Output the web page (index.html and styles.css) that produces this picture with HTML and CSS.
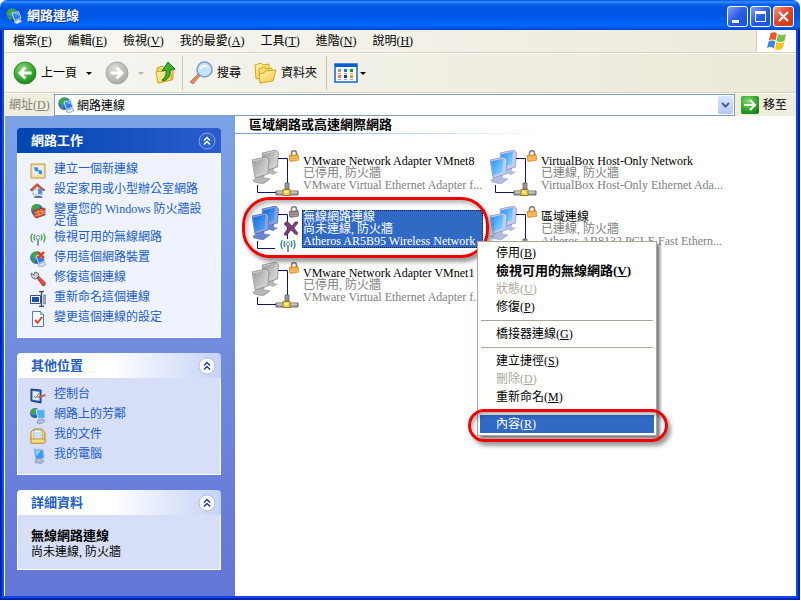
FILE: index.html
```html
<!DOCTYPE html>
<html lang="zh-Hant">
<head>
<meta charset="utf-8">
<meta name="viewport" content="width=device-width, initial-scale=1">
<title>網路連線</title>
<link rel="stylesheet" href="styles.css">
</head>
<body>
<svg class="defs" aria-hidden="true">
  <defs>
    <linearGradient id="screenOn" x1="0" y1="0" x2="1" y2="1"><stop offset="0" stop-color="#2f8cf0"/><stop offset="1" stop-color="#8fe0ff"/></linearGradient>
    <linearGradient id="screenOff" x1="0" y1="0" x2="1" y2="1"><stop offset="0" stop-color="#9a9a9a"/><stop offset="1" stop-color="#d8d8d8"/></linearGradient>
    <linearGradient id="screenSel" x1="0" y1="0" x2="1" y2="1"><stop offset="0" stop-color="#1568d8"/><stop offset="1" stop-color="#50a8f4"/></linearGradient>
    <radialGradient id="green" cx=".4" cy=".3" r=".8"><stop offset="0" stop-color="#86d676"/><stop offset=".6" stop-color="#35a52e"/><stop offset="1" stop-color="#177a14"/></radialGradient>
    <radialGradient id="grey" cx=".4" cy=".3" r=".8"><stop offset="0" stop-color="#dcdcd8"/><stop offset="1" stop-color="#a2a29f"/></radialGradient>
    <linearGradient id="folder" x1="0" y1="0" x2="1" y2="1"><stop offset="0" stop-color="#fff6b4"/><stop offset="1" stop-color="#f2c63c"/></linearGradient>
    <radialGradient id="globe" cx=".4" cy=".35" r=".7"><stop offset="0" stop-color="#6cb4f8"/><stop offset="1" stop-color="#0c3c90"/></radialGradient>
  </defs>
  <symbol id="netglobe" viewBox="0 0 16 16">
    <circle cx="6.500" cy="6.500" r="6.300" fill="url(#globe)"/>
    <path d="M3 1.500C6 0 9 1 9.500 3L6 4 5 7 3 7.500 1 5ZM1.500 9l3 0 1 3-2-.5Z" fill="#3caa36"/>
    <path d="M6 5l6.500-1.500L15 10l-6.500 2.500Z" fill="#2f7fe0" stroke="#c4daf8"/>
    <path d="M7.500 6L12 5l.8 2Z" fill="#86c4ff"/>
    <path d="M9 13l5-2 2 2.500-5 2.500-3-1.500Z" fill="#dbe3f2" stroke="#6d82aa" stroke-width=".6"/>
  </symbol>
  <symbol id="monitors" viewBox="0 0 27 34">
    <path d="M17 18l5-1v4l4 1-5 3-6-2 2-2Z" fill="var(--base)"/>
    <path d="M10 3l14-3 2.500 3-1 14-13 4Z" fill="var(--shell)" stroke="var(--edge)" stroke-width=".7"/>
    <path d="M11 4.500l12-3-1 13-10 3Z" fill="var(--screen)"/>
    <path d="M5 26l7-2v4l6 1-7 5-9-2-1-2 4-2Z" fill="var(--base)" stroke="var(--edge)" stroke-width=".5"/>
    <path d="M0 10l14-3 3 3-1 14-13 4Z" fill="var(--shell)" stroke="var(--edge)" stroke-width=".7"/>
    <path d="M1 11.500l12.500-3-1 14-9.500 3Z" fill="var(--screen)"/>
  </symbol>
  <symbol id="lock" viewBox="0 0 10 12">
    <path d="M2.500 6V3q0-2.300 2.500-2.300T7.500 3v3" fill="none" stroke="#858078" stroke-width="1.600"/>
    <path d="M0 5.500l9-1 1 5.500-8 1.500-2-1.500Z" fill="var(--lock)" stroke="var(--lockedge)" stroke-width=".6"/>
    <path d="M1 7.500h8M1 9.500h8" stroke="#fff" stroke-opacity=".35" stroke-width=".7"/>
  </symbol>
  <symbol id="antenna" viewBox="0 0 16 13">
    <path d="M8 6v7" stroke="#8a8fc0" stroke-width="2"/><circle cx="8" cy="5" r="2" fill="#e8f2ff" stroke="#7c88b8"/>
    <path d="M5 2q-2 3 0 6M11 2q2 3 0 6M2.500 1q-3 4.500 0 9M13.500 1q3 4.500 0 9" fill="none" stroke="var(--wave,#3aa63a)" stroke-width="1.300"/>
  </symbol>
  <symbol id="lan" viewBox="0 0 48 46">
    <use href="#monitors" width="27" height="34"/>
    <path d="M26 8.500h9.500V34M5.500 35v7.500H24" fill="none" stroke="var(--wire)"/>
    <use href="#lock" x="37" width="10" height="12"/>
    <path d="M33 33h4v6h-4Z" fill="#9b9b96" stroke="#555" stroke-width=".7"/>
    <path d="M24 41h22v4H24Z" fill="#aaa9a2" stroke="#4c4c48" stroke-width=".8"/>
    <path d="M25 42h20" stroke="#deded8"/>
    <path d="M31 39.500h7v6h-7Z" fill="#f5d24a" stroke="#8a6a10" stroke-width=".8"/>
    <path d="M32.500 41h3v2h-3Z" fill="#fff6b8"/>
  </symbol>
  <symbol id="wlan" viewBox="0 0 48 46">
    <use href="#monitors" width="27" height="34"/>
    <path d="M26 8.500h9.500V33M5.500 35v7.500H23" fill="none" stroke="var(--wire)"/>
    <use href="#lock" x="37" width="10" height="12"/>
    <path d="M33 17q2-3 4 0l3 3 3-4q3-1 3 1l-4 5 4 5q-1 3-3 1l-4-4-4 5q-3 1-3-1l4-6-4-4Z" fill="#7b3c78" stroke="#54306c" stroke-width=".6"/>
    <use href="#antenna" x="28" y="33" width="16" height="13"/>
  </symbol>
  <symbol id="chev" viewBox="0 0 20 20">
    <circle cx="10" cy="10" r="8" fill="var(--disc)" stroke="var(--ring)"/>
    <path d="M7 9.500l3-3 3 3M7 13.500l3-3 3 3" fill="none" stroke="var(--mark)" stroke-width="1.500"/>
  </symbol>
  <symbol id="pc" viewBox="0 0 16 16">
    <path d="M4 1l9 1 1 8-8 1Z" fill="#3d98ee" stroke="#98b4e2"/><path d="M5 2l6 .5L6.500 8Z" fill="#8ccfff"/>
    <path d="M6 11l5-1v2l3 1-3 2.500-6-1Z" fill="#aebcd8" stroke="#6f80a6" stroke-width=".6"/>
  </symbol>
</svg>

<div class="window">
  <header class="titlebar">
    <svg class="i16"><use href="#netglobe"/></svg>
    <h1>網路連線</h1>
    <div class="winbtns">
      <button class="wb" aria-label="最小化"><svg viewBox="0 0 19 19"><path d="M4 13h7v3H4Z" fill="#fff"/></svg></button>
      <button class="wb" aria-label="最大化"><svg viewBox="0 0 19 19"><path d="M4 4h11v3H4Z" fill="#fff"/><path d="M4.500 4.500h10v10h-10Z" fill="none" stroke="#fff"/></svg></button>
      <button class="wb close" aria-label="關閉"><svg viewBox="0 0 19 19"><path d="M5 5l9 9M14 5l-9 9" stroke="#fff" stroke-width="2.200"/></svg></button>
    </div>
  </header>

  <div class="frame">
    <div class="menurow">
      <nav class="menubar" aria-label="功能表">
        <button>檔案(<u>F</u>)</button><button>編輯(<u>E</u>)</button><button>檢視(<u>V</u>)</button><button>我的最愛(<u>A</u>)</button><button>工具(<u>T</u>)</button><button>進階(<u>N</u>)</button><button>說明(<u>H</u>)</button>
      </nav>
      <div class="flag">
        <svg viewBox="0 0 20 18"><path d="M3.500 1.500Q7-1 10 1.500L8.500 8.500Q5 6.500 1.800 8.500Z" fill="#e8562c"/><path d="M11 2Q15 4 19 2L17.500 9Q13.500 11 9.500 9Z" fill="#7dc142"/><path d="M1.600 9.500Q5 7.500 8.300 9.500L7 16.500Q3.500 14 0 16Z" fill="#3d86dc"/><path d="M9.300 10Q13 12 17.300 10L15.700 16.500Q11.500 19 8 17Z" fill="#f8c21c"/></svg>
      </div>
    </div>

    <div class="toolbar">
      <button class="tb back"><svg class="i24" viewBox="0 0 24 24"><circle cx="12" cy="12" r="11" fill="url(#green)" stroke="#237c20" stroke-width=".8"/><path d="M18.500 12H7M12.500 6.500L7 12l5.500 5.500" fill="none" stroke="#fff" stroke-width="3"/></svg>上一頁</button>
      <button class="caret" aria-label="上一頁清單"></button>
      <button class="tb fwd" aria-label="下一頁" disabled><svg class="i24" viewBox="0 0 24 24"><circle cx="12" cy="12" r="11" fill="url(#grey)" stroke="#a0a09c" stroke-width=".8"/><path d="M5.500 12H17M11.500 6.500L17 12l-5.500 5.500" fill="none" stroke="#fff" stroke-width="3"/></svg></button>
      <button class="caret dim" aria-label="下一頁清單" disabled></button>
      <button class="tb up" aria-label="上一層"><svg class="i24" viewBox="0 0 24 24"><path d="M4 7l5-2 3 2 8-1v12L5 22Z" fill="#f4d568" stroke="#cf9c1c"/><path d="M3 11l14-2 2 10-14 3Z" fill="url(#folder)" stroke="#d6a522"/><path d="M9 19q5-3 4-10l-4 1 6-9 7 7-5 1q1 9-7 11Z" fill="#3fb033" stroke="#1c7a18"/></svg></button>
      <span class="sep"></span>
      <button class="tb find"><svg class="i24" viewBox="0 0 24 24"><path d="M1 21l8-8 2 2-7 8Z" fill="#e48a54" stroke="#a66e6a" stroke-width=".8"/><circle cx="15.500" cy="8.500" r="7.500" fill="#c4e4ff" stroke="#7f9fd4" stroke-width="1.600"/><path d="M11 9q0-5 5-5 3 0 4 2-6-1-9 3Z" fill="#fff"/></svg>搜尋</button>
      <button class="tb folders"><svg class="i24" viewBox="0 0 24 24"><path d="M2 4l6-2 2 2 6-1v12L3 18Z" fill="url(#folder)" stroke="#d6a522"/><path d="M6 8l5-2 2 2 6-1v12L7 22Z" fill="#f8dc70" stroke="#d6a522"/><path d="M6 13l5-1 1-2 11-1-3 11-13 2Z" fill="url(#folder)" stroke="#d6a522"/></svg>資料夾</button>
      <span class="sep"></span>
      <button class="tb views" aria-label="檢視"><svg class="i24" viewBox="0 0 24 20"><path d="M1 1h22v18H1Z" fill="#f7fbff" stroke="#1464cc" stroke-width="1.500"/><path d="M1 1h22v3H1Z" fill="#0a5cd0"/><path d="M4 6h3v3H4Z" fill="#9a90cc"/><path d="M10 6h3v3h-3Z" fill="#1878f0"/><path d="M16 6h3v3h-3Z" fill="#109a20"/><path d="M4 12h3v3H4Z" fill="#f47848"/><path d="M10 12h3v3h-3Z" fill="#103a9c"/><path d="M16 12h3v3h-3Z" fill="#d8a400"/><path d="M4 10.500h3m3 0h3m3 0h3M4 16.500h3m3 0h3m3 0h3" stroke="#a8a8b0"/></svg></button>
      <button class="caret" aria-label="檢視清單"></button>
    </div>

    <div class="address">
      <label for="addr">網址(<u>D</u>)</label>
      <div class="field">
        <svg class="i16"><use href="#netglobe"/></svg>
        <input id="addr" type="text" value="網路連線">
        <button class="drop" aria-label="展開"><svg viewBox="0 0 15 18"><path d="M4 7l3.500 3.500L11 7" fill="none" stroke="#4d6185" stroke-width="2"/></svg></button>
      </div>
      <button class="go"><svg viewBox="0 0 18 18"><path d="M0 0h18v18H0Z" fill="url(#green)"/><path d="M3 9h10M9 4l5 5-5 5" fill="none" stroke="#fff" stroke-width="2"/></svg>移至</button>
    </div>

    <main class="content">
      <aside class="side">
        <section class="panel primary">
          <header><h2>網路工作</h2><button aria-label="摺疊"><svg><use href="#chev"/></svg></button></header>
          <ul>
            <li><svg class="i16" viewBox="0 0 16 16"><path d="M1 1h14v14H1Z" fill="#f5e2a0" stroke="#c59a3c"/><path d="M3 3h10v9H3Z" fill="#e4efff"/><path d="M4 4l4 .5v4L5 8ZM8 7l4 .5v4L9 11Z" fill="#3b8ae4"/></svg><a href="#">建立一個新連線</a></li>
            <li><svg class="i16" viewBox="0 0 16 16"><path d="M3 6h9v6H3Z" fill="#e8eefa" stroke="#8998b8" stroke-width=".7"/><path d="M0 7l7-6.500L15 7l-1 1-7-5-5 5Z" fill="#df5430" stroke="#a83818" stroke-width=".6"/><path d="M8 6h4v5H8Z" fill="#4d94dc"/><path d="M5 13h6l2 2H4Z" fill="#56709c"/></svg><a href="#">設定家用或小型辦公室網路</a></li>
            <li><svg class="i16" viewBox="0 0 16 16"><circle cx="7" cy="7" r="6" fill="url(#globe)"/><path d="M2 3q5-4 8 0L7 7H2Z" fill="#42a83c"/><path d="M4 7l11-2v7L6 15l-2-2Z" fill="#cf5530" stroke="#86301a" stroke-width=".7"/><path d="M4 10l11-2M5 13l10-3M8 7v3m3-4v3m-2 1v3m4-4v2" stroke="#f4b090" stroke-width=".7"/></svg><a href="#">變更您的 Windows 防火牆設定值</a></li>
            <li><svg class="i16"><use href="#antenna"/></svg><a href="#">檢視可用的無線網路</a></li>
            <li><svg class="i16" viewBox="0 0 16 16"><use href="#netglobe"/><path d="M8 1l6 6M14 1L8 7" stroke="#e83a18" stroke-width="2.400"/></svg><a href="#">停用這個網路裝置</a></li>
            <li><svg class="i16" viewBox="0 0 16 16"><path d="M1 2l3 2 1-3q4 0 4 4l-3 3q-5 0-5-6Z" fill="#c9ccd4" stroke="#52545c" stroke-width=".8"/><path d="M7 7l2-1.500 6 6q1 3-2 3.500Z" fill="#e85038" stroke="#8e2216" stroke-width=".8"/></svg><a href="#">修復這個連線</a></li>
            <li><svg class="i16" viewBox="0 0 16 16"><path d="M.5 4.500h10v8H.5Z" fill="#fff" stroke="#3b5288"/><path d="M2 6h7v5H2Z" fill="#1450b8"/><path d="M9 .5h5M11.500 1v14M9 15.500h5" stroke="#3c4862" stroke-width="1.300"/><path d="M13.500 4v9h2V4Z" fill="#a5b4d2" stroke="#56688e" stroke-width=".6"/></svg><a href="#">重新命名這個連線</a></li>
            <li><svg class="i16" viewBox="0 0 16 16"><path d="M2.500.5h8l3 3v12h-11Z" fill="#f8fbff" stroke="#4f7cb8"/><path d="M10.500.5v3h3" fill="#c8dcf4" stroke="#4f7cb8" stroke-width=".7"/><path d="M5 9l2.500 3L12 6" fill="none" stroke="#e64824" stroke-width="2"/></svg><a href="#">變更這個連線的設定</a></li>
          </ul>
        </section>
        <section class="panel">
          <header><h2>其他位置</h2><button aria-label="摺疊"><svg><use href="#chev"/></svg></button></header>
          <ul>
            <li><svg class="i16" viewBox="0 0 16 16"><path d="M1 1l10 1v13L1 13Z" fill="#2c5fae" stroke="#1c3f7c"/><path d="M2.500 3l7 .7v9l-7-1Z" fill="#e6f1ff"/><path d="M4 8l2 2 3-5" fill="none" stroke="#6d87ae"/><path d="M7 9l8-3 1 2-7 2Z" fill="#c05c4c"/></svg><a href="#">控制台</a></li>
            <li><svg class="i16" viewBox="0 0 16 16"><circle cx="5" cy="5" r="5" fill="url(#globe)"/><path d="M1 2q4-3 7 0L5 6H1Z" fill="#42a83c"/><path d="M6 2l9-1v9l-7 1Z" fill="#52b0f8" stroke="#d0def4"/><path d="M8 12l5-1 2 2-4 3-4-1Z" fill="#b4c0da" stroke="#6f80a6" stroke-width=".6"/></svg><a href="#">網路上的芳鄰</a></li>
            <li><svg class="i16" viewBox="0 0 16 16"><path d="M1 4l3-3h8l3 4v9l-1 1H1Z" fill="url(#folder)" stroke="#b98318"/><path d="M4 2h6l2 2v7H4Z" fill="#fff" stroke="#6f93c4" stroke-width=".7"/><path d="M5 5h6M5 7h6M5 9h6" stroke="#7ba6dc" stroke-width=".7"/><path d="M1 11h14v4H1Z" fill="#f9df84" stroke="#b98318" stroke-width=".7"/></svg><a href="#">我的文件</a></li>
            <li><svg class="i16"><use href="#pc"/></svg><a href="#">我的電腦</a></li>
          </ul>
        </section>
        <section class="panel">
          <header><h2>詳細資料</h2><button aria-label="摺疊"><svg><use href="#chev"/></svg></button></header>
          <div class="details"><strong>無線網路連線</strong><span>尚未連線, 防火牆</span></div>
        </section>
      </aside>

      <section class="pane">
        <h2 class="group">區域網路或高速網際網路</h2>
        <div class="tiles">
          <article class="tile off"><svg><use href="#lan"/></svg><div><h3>VMware Network Adapter VMnet8</h3><p>已停用, 防火牆</p><p>VMware Virtual Ethernet Adapter f...</p></div></article>
          <article class="tile"><svg><use href="#lan"/></svg><div><h3>VirtualBox Host-Only Network</h3><p>已連線, 防火牆</p><p>VirtualBox Host-Only Ethernet Ada...</p></div></article>
          <article class="tile selected"><svg><use href="#wlan"/></svg><div><h3>無線網路連線</h3><p>尚未連線, 防火牆</p><p>Atheros AR5B95 Wireless Network ...</p></div></article>
          <article class="tile"><svg><use href="#lan"/></svg><div><h3>區域連線</h3><p>已連線, 防火牆</p><p>Atheros AR8132 PCI-E Fast Ethern...</p></div></article>
          <article class="tile off"><svg><use href="#lan"/></svg><div><h3>VMware Network Adapter VMnet1</h3><p>已停用, 防火牆</p><p>VMware Virtual Ethernet Adapter f...</p></div></article>
        </div>
        <div class="ring ring-tile"></div>
        <div class="context" role="menu">
          <button role="menuitem">停用(<u>B</u>)</button>
          <button role="menuitem" class="default">檢視可用的無線網路(<u>V</u>)</button>
          <button role="menuitem" disabled>狀態(<u>U</u>)</button>
          <button role="menuitem">修復(<u>P</u>)</button>
          <hr>
          <button role="menuitem">橋接器連線(<u>G</u>)</button>
          <hr>
          <button role="menuitem">建立捷徑(<u>S</u>)</button>
          <button role="menuitem" disabled>刪除(<u>D</u>)</button>
          <button role="menuitem">重新命名(<u>M</u>)</button>
          <hr>
          <button role="menuitem" class="hot">內容(<u>R</u>)</button>
          <div class="ring ring-item"></div>
        </div>
      </section>
    </main>
  </div>
</div>
</body>
</html>
```
FILE: styles.css
```css
* { box-sizing: border-box; }

body {
  margin: 0;
  background: #fff;
  color: #000;
  font: 12px/12px "Liberation Serif", "Noto Sans CJK TC", serif;
}

h1, h2, h3, p, ul { margin: 0; padding: 0; font-size: 12px; }
h3, p { font-weight: normal; }
svg { display: block; flex: none; }
u { text-underline-offset: 1px; }

button {
  margin: 0;
  padding: 0;
  border: 0;
  background: none;
  color: inherit;
  font: inherit;
  white-space: nowrap;
}

.defs { position: absolute; width: 0; height: 0; }
.i16 { width: 16px; height: 16px; }
.i24 { width: 24px; height: 24px; }

.window {
  display: flex;
  flex-direction: column;
  min-height: calc(100vh - 1px);
  margin: 0 1px 1px 0;
}

/* Title bar */
.titlebar {
  display: flex;
  align-items: center;
  gap: 5px;
  height: 30px;
  padding: 2px 6px 0;
  border-radius: 7px 7px 0 0;
  background: linear-gradient(#0058e6 0, #3a8dff 2px, #0a64ee 4px, #0054e0 8px, #0055e5 16px, #0068ff 25px, #0060f4 27px, #0040c8 30px);
}
.titlebar h1 { flex: 1; color: #fff; font-weight: bold; font-size: 13px; text-shadow: 1px 1px #0a2f8c; }
.winbtns { display: flex; gap: 2px; }
.wb {
  width: 21px;
  height: 21px;
  border: 1px solid #fff;
  border-radius: 3px;
  background: linear-gradient(135deg, #7f9ef4, #2a5ce8 50%, #1c4fdc);
}
.wb svg { width: 19px; height: 19px; }
.wb.close { background: linear-gradient(135deg, #f0a088, #e0482a 45%, #c83414); }

.frame {
  display: flex;
  flex: 1;
  flex-direction: column;
  border: 2px solid #0022b4;
  border-top: 0;
  box-shadow: inset 2px 0 #0a55ec, inset -2px 0 #0a48e8, inset 0 -2px #0a48e8;
  padding: 0 2px 2px;
}

/* Menu, toolbar and address rows */
.menurow {
  display: flex;
  height: 23px;
  border-bottom: 1px solid #d8d2bd;
  background: linear-gradient(90deg, #f8f8f4, #edeadb);
}
.menubar { display: flex; flex: 1; padding-left: 1px; }
.menubar button { padding: 0 8px; }
.flag {
  display: flex;
  align-items: center;
  justify-content: center;
  width: 40px;
  border-left: 1px solid #d8d2bd;
  background: #fff;
}
.flag svg { width: 20px; height: 18px; }

.toolbar {
  display: flex;
  align-items: center;
  height: 40px;
  padding-left: 9px;
  border-top: 1px solid #fff;
  border-bottom: 1px solid #d8d2bd;
  background: linear-gradient(90deg, #f6f6f2, #ece9d8);
}
.tb { display: flex; align-items: center; gap: 4px; }
.caret { display: flex; justify-content: center; width: 24px; }
.caret::before { content: ""; border: 3px solid transparent; border-top-color: #000; border-bottom: 0; }
.dim::before { border-top-color: #b8b6aa; }
.fwd { margin-left: 4px; }
.up { margin-right: 5px; }
.find { margin: 0 12px 0 6px; }
.folders { margin-right: 9px; }
.views { margin-left: 7px; }
.views svg { height: 20px; }
.views + .caret { width: 10px; }
.sep { width: 1px; height: 34px; background: #c9c3ab; }

.address {
  display: flex;
  align-items: center;
  height: 23px;
  padding: 1px 9px 1px 5px;
  border-top: 1px solid #fff;
  background: #efedde;
}
.address label { color: #808078; width: 45px; white-space: nowrap; }
.field {
  display: flex;
  flex: 1;
  align-items: center;
  height: 22px;
  padding: 1px;
  border: 1px solid #7f9db9;
  background: #fff;
}
.field .i16 { margin-left: 2px; }
.field input {
  flex: 1;
  min-width: 0;
  padding: 0 0 0 3px;
  border: 0;
  outline: 0;
  background: none;
  font: inherit;
}
.drop { width: 15px; height: 18px; border-radius: 2px; background: linear-gradient(#dce6ff, #b4c8f6); }
.drop svg { width: 15px; height: 18px; }
.go { display: flex; align-items: center; gap: 4px; margin-left: 6px; }
.go svg { width: 18px; height: 18px; border-radius: 2px; }

/* Task pane */
.content { display: flex; flex: 1; background: #fff; }
.side {
  display: flex;
  flex: none;
  flex-direction: column;
  gap: 15px;
  width: 231px;
  padding: 12px 14px 12px 12px;
  border-left: 1px solid #fff;
  background: linear-gradient(#7ba2e7, #6375d6);
}
.panel {
  --disc: #fff;
  --ring: #b4c0e4;
  --mark: #1d3f9c;
}
.panel header {
  display: flex;
  align-items: center;
  justify-content: space-between;
  height: 25px;
  padding: 0 4px 0 14px;
  border-radius: 4px 4px 0 0;
  background: linear-gradient(90deg, #fff 45%, #c6d3f7);
  color: #215dc6;
}
.panel header svg { width: 20px; height: 20px; }
.panel h2 { font-size: 13px; }
.panel ul, .details { border: 1px solid #fff; border-top: 0; background: #d6dff7; }
.panel ul {
  display: flex;
  flex-direction: column;
  gap: 4px;
  padding: 10px 14px 10px 12px;
  list-style: none;
}
.panel li { display: flex; gap: 8px; min-height: 16px; }
.panel a { color: #215dc6; text-decoration: none; }
.primary { --disc: #2f62cc; --ring: #86a6e6; --mark: #fff; }
.primary header { background: linear-gradient(90deg, #0047b0, #2a5cd0); color: #fff; }
.primary ul { background: #eff3ff; }
.details { padding: 12px 13px 8px; line-height: 17px; }
.details strong, .details span { display: block; }
.details strong { font-size: 13px; }

/* Connections */
.pane { position: relative; flex: 1; min-width: 0; }
.group {
  padding: 3px 0 2px 14px;
  border-bottom: 1px solid;
  border-image: linear-gradient(90deg, #70a0ec, #fff 55%) 1;
  font-size: 13px;
}
.tiles {
  display: grid;
  grid-template-columns: repeat(auto-fill, 238px);
  gap: 10px 0;
  padding: 16px 0 0 17px;
}
.tile {
  --screen: url(#screenOn);
  --shell: #c4cdee;
  --base: #b4bce0;
  --edge: #7f8cc0;
  --wire: #14146c;
  --lock: #f4a83c;
  --lockedge: #c87818;
  display: flex;
  align-items: center;
  gap: 2px;
  padding-right: 7px;
}
.tile svg { width: 48px; height: 46px; }
.tile div { flex: 1; min-width: 0; border: 1px solid transparent; white-space: nowrap; }
.tile p { color: #808080; }
.off { --screen: url(#screenOff); --shell: #cecece; --base: #b6b6b6; --edge: #808080; }
.selected {
  --screen: url(#screenSel);
  --shell: #8aa2e0;
  --base: #6c84d0;
  --edge: #4860b4;
  --lock: #8a8278;
  --lockedge: #5c6484;
  --wave: #2c8c6c;
}
.selected div { border: 1px dotted #101c40; background: #316ac5; }
.selected h3, .selected p { color: #fff; }

/* Context menu and highlight rings */
.context {
  position: absolute;
  top: 125px;
  left: 242px;
  width: 180px;
  padding: 2px;
  border: 1px solid #aca899;
  background: #fff;
  box-shadow: 3px 3px 3px rgba(0, 0, 0, .5);
}
.context button { display: block; width: 100%; height: 18px; padding: 0 16px; text-align: left; }
.context button:disabled { color: #aca899; }
.context .default { font-weight: bold; font-size: 13px; }
.context .hot { background: #316ac5; color: #fff; }
.context hr { height: 1px; margin: 4px 1px; border: 0; background: #aca899; }
.ring {
  position: absolute;
  border: 3px solid #f00000;
  box-shadow: 3px 4px 4px rgba(0, 0, 0, .4), inset 2px 3px 4px rgba(0, 0, 0, .3);
  pointer-events: none;
}
.ring-tile { top: 81px; left: 7px; width: 247px; height: 61px; border-radius: 28px; }
.ring-item { top: 167px; left: -10px; width: 200px; height: 33px; border-radius: 17px; }
```
